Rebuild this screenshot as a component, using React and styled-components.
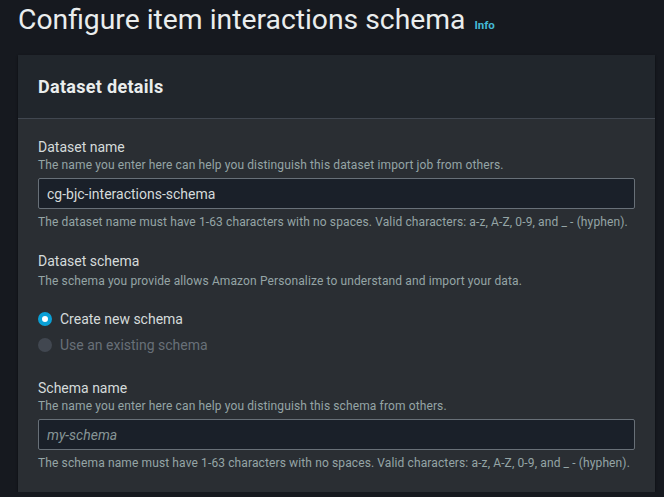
import React from "react";
import styled, { createGlobalStyle } from "styled-components";

const GlobalStyle = createGlobalStyle`
  html, body {
    margin: 0;
    padding: 0;
    background: #16191f;
  }
  body {
    font-family: Roboto, "Liberation Sans", Arial, sans-serif;
    color: #d5dbdb;
  }
`;

const Page = styled.div`
  padding: 2px 9px 0 18px;
`;

const TitleRow = styled.div`
  display: flex;
  align-items: baseline;
  gap: 9px;
  height: 53px;
`;

const Title = styled.h1`
  margin: 0;
  font-size: 28.3px;
  font-weight: 400;
  line-height: 36px;
  color: #eaeded;
`;

const InfoLink = styled.a`
  font-size: 11.5px;
  font-weight: 700;
  color: #44b9d6;
  text-decoration: none;
`;

const Panel = styled.section`
  background: #2a2e33;
  box-shadow: 0 1px 2px rgba(0, 0, 0, 0.6);
`;

const PanelHeader = styled.header`
  height: 63px;
  display: flex;
  align-items: center;
  padding: 0 20px;
  background: #21262c;
  border-bottom: 1px solid #414750;
  font-size: 18px;
  font-weight: 700;
  letter-spacing: 0.3px;
  color: #eaeded;
`;

const PanelBody = styled.div`
  padding: 18px 20px 21px;
`;

const Field = styled.div`
  display: flex;
  flex-direction: column;
  margin-bottom: ${(p) => p.$gap || 0}px;
`;

const Label = styled.div`
  font-size: 14px;
  line-height: 20px;
  color: #d5dbdb;
`;

const Description = styled.div`
  font-size: 12px;
  line-height: 16px;
  color: #95a5a6;
  margin-top: ${(p) => p.$top || 0}px;
  letter-spacing: 0.12px;
`;

const Input = styled.input`
  box-sizing: border-box;
  width: 100%;
  height: 31px;
  margin-top: 5px;
  padding: 0 8px;
  background: #1a2029;
  border: 1px solid #687078;
  border-radius: 2px;
  font-family: inherit;
  font-size: 14px;
  color: #d5dbdb;
  outline: none;
  &::placeholder {
    color: #879596;
    font-style: italic;
  }
`;

const RadioGroup = styled.div`
  display: flex;
  flex-direction: column;
  margin-top: 17px;
  margin-bottom: 20px;
`;

const RadioRow = styled.label`
  display: flex;
  align-items: center;
  gap: 8px;
  height: 26px;
  font-size: 14px;
  color: ${(p) => (p.$disabled ? "#687078" : "#d5dbdb")};
`;

const RadioDot = styled.span`
  box-sizing: border-box;
  width: 14px;
  height: 14px;
  border-radius: 50%;
  background: ${(p) => (p.$checked ? "#fff" : "#414750")};
  border: ${(p) => (p.$checked ? "4.5px solid #0aa0d6" : "none")};
`;

export default function App() {
  return (
    <Page>
      <GlobalStyle />
      <TitleRow>
        <Title>Configure item interactions schema</Title>
        <InfoLink href="#">Info</InfoLink>
      </TitleRow>
      <Panel>
        <PanelHeader>Dataset details</PanelHeader>
        <PanelBody>
          <Field $gap={21}>
            <Label>Dataset name</Label>
            <Description>
              The name you enter here can help you distinguish this dataset import job from others.
            </Description>
            <Input defaultValue="cg-bjc-interactions-schema" />
            <Description $top={5}>
              The dataset name must have 1-63 characters with no spaces. Valid characters: a-z, A-Z, 0-9, and _ - (hyphen).
            </Description>
          </Field>
          <Field>
            <Label>Dataset schema</Label>
            <Description $top={2}>
              The schema you provide allows Amazon Personalize to understand and import your data.
            </Description>
          </Field>
          <RadioGroup>
            <RadioRow>
              <RadioDot $checked />
              Create new schema
            </RadioRow>
            <RadioRow $disabled>
              <RadioDot />
              Use an existing schema
            </RadioRow>
          </RadioGroup>
          <Field>
            <Label>Schema name</Label>
            <Description>
              The name you enter here can help you distinguish this schema from others.
            </Description>
            <Input placeholder="my-schema" />
            <Description $top={5}>
              The schema name must have 1-63 characters with no spaces. Valid characters: a-z, A-Z, 0-9, and _ - (hyphen).
            </Description>
          </Field>
        </PanelBody>
      </Panel>
    </Page>
  );
}
